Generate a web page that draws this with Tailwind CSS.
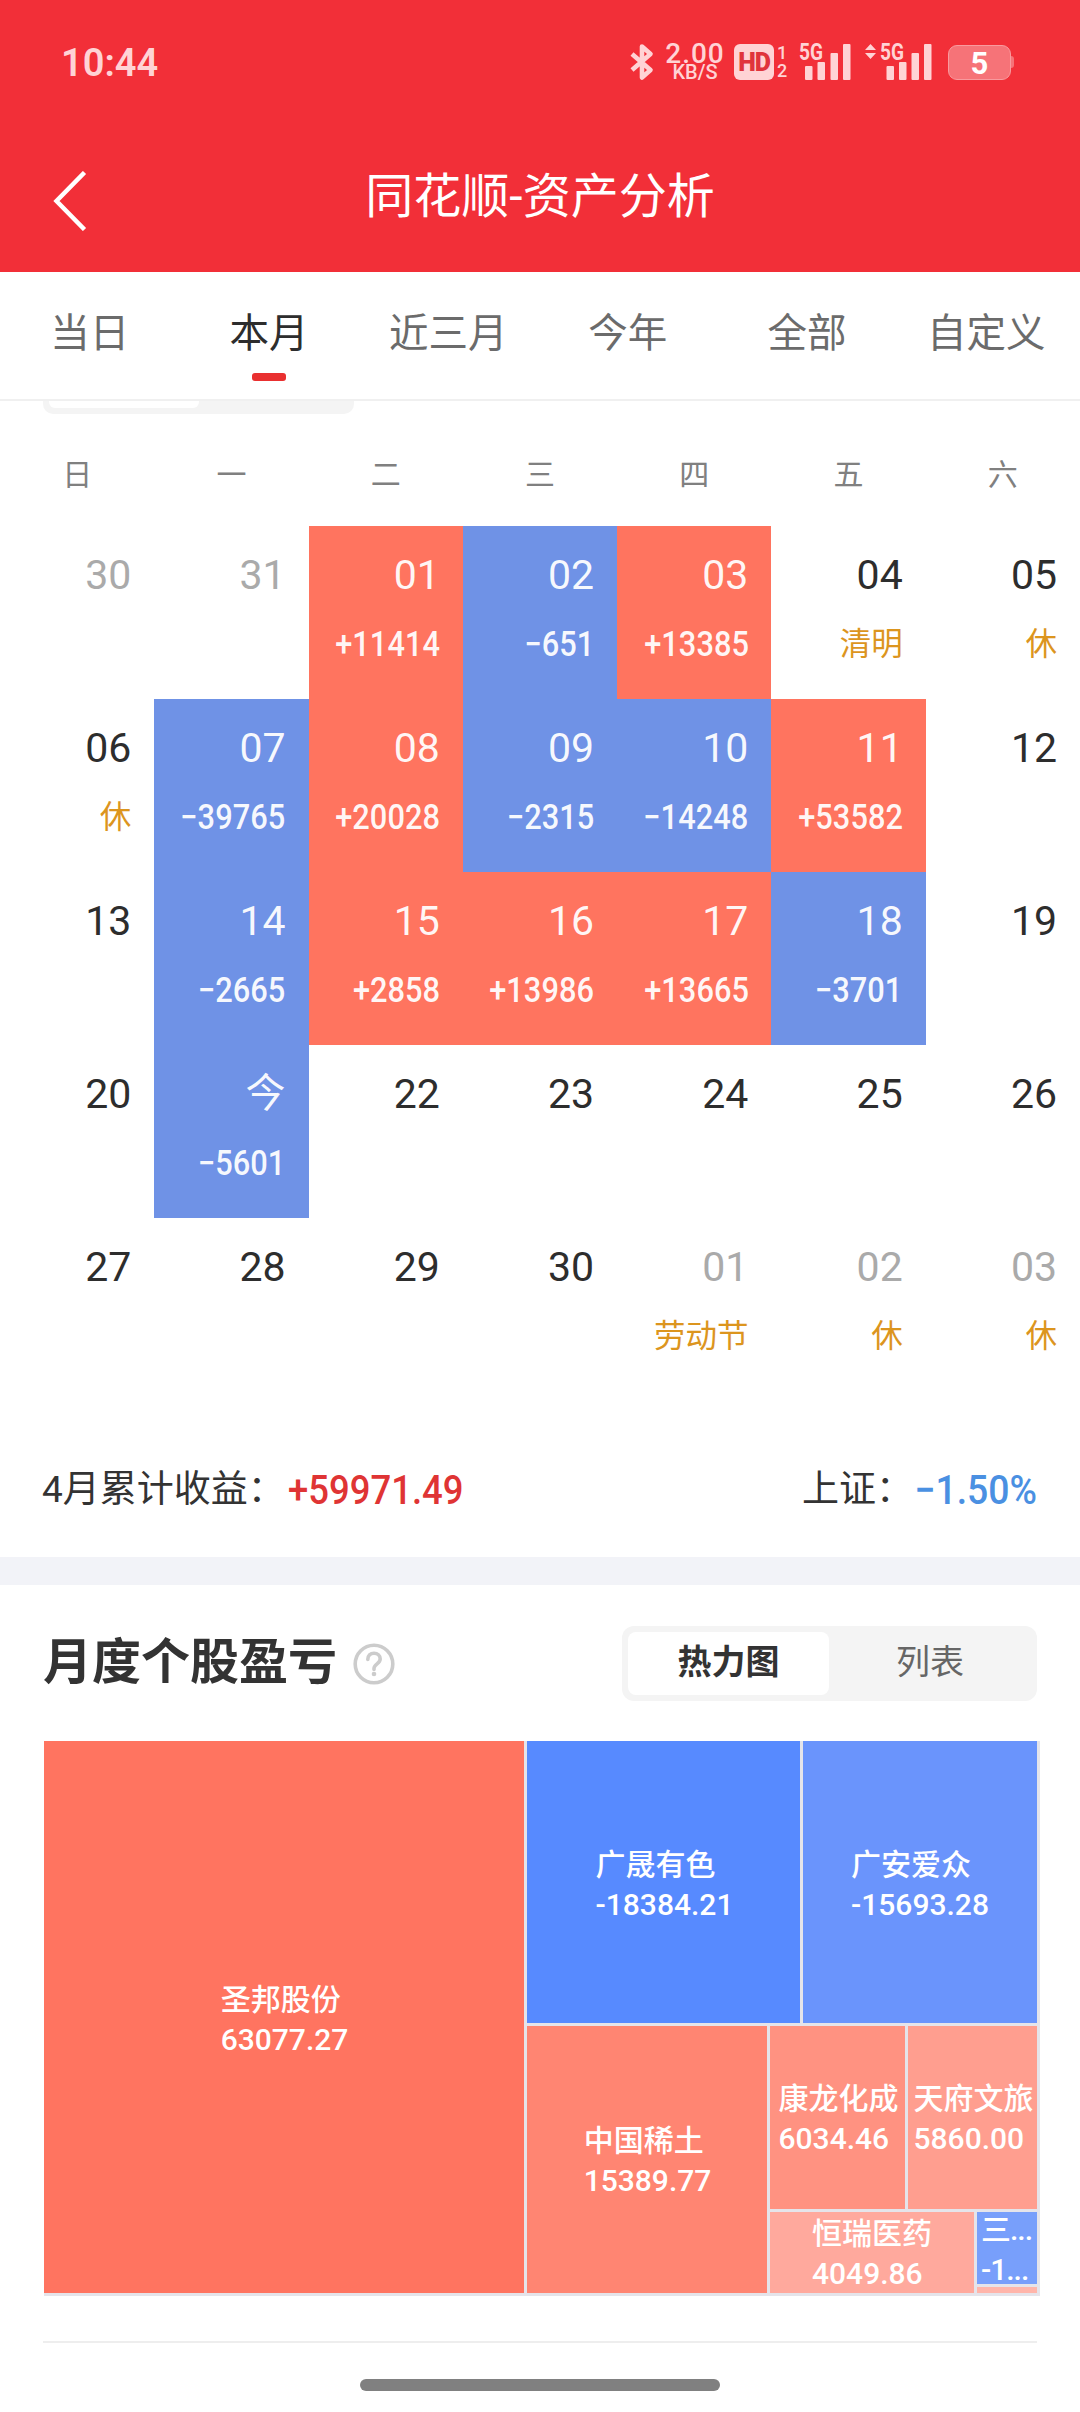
<!DOCTYPE html>
<html lang="zh-CN">

<head>
  <meta charset="UTF-8">
  <meta name="viewport"
    content="width=device-width, initial-scale=1.0">
  <title>同花顺-资产分析</title>
  <script src="https://cdn.jsdelivr.net/npm/@tailwindcss/browser@4"></script>
</head>

<body
  class="bg-white w-[1080px] h-[2412px] overflow-hidden flex flex-col font-[Roboto,'Noto_Sans_CJK_SC',sans-serif] text-[#333]">

  <header class="bg-[#f22f38] h-[272px] shrink-0 text-white">
    <!-- Status bar -->
    <div class="h-[124px] pl-[61px] pr-[66px] flex items-center justify-between text-[#ffd3d5]">
      <span class="text-[38px] leading-none font-semibold pt-0.5">10:44</span>
      <div class="flex items-center h-[38px]">
        <svg class="w-[24px] h-[38px] mr-[11px]" viewBox="0 0 24 38" fill="none" stroke="currentColor" stroke-width="4.6" stroke-linejoin="round">
          <path d="M2 11 20.500 27 12 34.500V3.500L20.500 11 2 27" />
        </svg>
        <div class="w-[60px] h-[38px] mr-[9px] flex flex-col items-center">
          <span class="text-[28px] leading-[21px] font-medium tracking-[1px]">2.00</span>
          <span class="text-[20px] leading-[17px] font-medium">KB/S</span>
        </div>
        <div class="w-10 h-9 rounded-md bg-[#ffd3d5] text-[#e0343c] flex items-center justify-center text-[25px] leading-none font-black tracking-[-1px]">HD</div>
        <div class="w-[14px] ml-px mr-[10px] flex flex-col items-center text-[18px] leading-[18px] font-medium">
          <span>1</span>
          <span>2</span>
        </div>
        <svg class="w-[54px] h-[38px] mr-[12px] overflow-visible" viewBox="0 0 54 38" fill="currentColor">
          <text x="0" y="16.500" font-size="23" font-weight="700" textLength="24" lengthAdjust="spacingAndGlyphs">5G</text>
          <rect x="6" y="23" width="7.5" height="14" rx="1" />
          <rect x="18.5" y="19" width="7.5" height="18" rx="1" />
          <rect x="31.5" y="10" width="7.5" height="27" rx="1" />
          <rect x="44" y="1" width="7.5" height="36" rx="1" />
        </svg>
        <svg class="w-[70px] h-[38px] mr-[13px] overflow-visible" viewBox="0 0 70 38" fill="currentColor">
          <path d="M5.5 1 11 7H0ZM5.5 16 11 10H0Z" />
          <text x="15" y="16.500" font-size="23" font-weight="700" textLength="24" lengthAdjust="spacingAndGlyphs">5G</text>
          <rect x="21.500" y="23" width="7.5" height="14" rx="1" />
          <rect x="34" y="19" width="7.5" height="18" rx="1" />
          <rect x="46.500" y="10" width="7.5" height="27" rx="1" />
          <rect x="59" y="1" width="7.5" height="36" rx="1" />
        </svg>
        <div class="w-[63px] h-[35px] rounded-[9px] bg-[#f67378] border border-[#f99a9e] flex items-center justify-center text-white text-[31px] leading-none font-bold pt-0.5">5</div>
        <div class="w-[3px] h-[12px] rounded-r-[3px] bg-[#f67378]"></div>
      </div>
    </div>
    <!-- Title bar -->
    <div class="h-[148px] flex items-start">
      <svg class="w-[34px] h-[60px] ml-[53px] mt-[47px]" viewBox="0 0 34 60" fill="none" stroke="currentColor" stroke-width="4.5">
        <path d="M31.500 1.500 3.500 30 31.500 58.500" />
      </svg>
      <h1 class="flex-1 pr-[87px] mt-[37px] text-center text-[48px] leading-[72px]">同花顺-资产分析</h1>
    </div>
  </header>

  <nav class="h-[129px] shrink-0 border-b-2 border-[#f0f0f0] pr-[4px] grid grid-cols-6 text-center text-[39.500px] leading-[60px] text-[#6b6b6b]">
    <span class="pt-[32px]">当日</span>
    <span class="pt-[32px] text-[#2d2d2d] flex flex-col items-center">本月<i class="block w-[34px] h-2 mt-[9px] rounded-[3px] bg-[#e93030]"></i></span>
    <span class="pt-[32px]">近三月</span>
    <span class="pt-[32px]">今年</span>
    <span class="pt-[32px]">全部</span>
    <span class="pt-[32px]">自定义</span>
  </nav>

  <!-- Bottom edge of the scrolled calendar switch -->
  <div class="ml-[43px] w-[311px] h-[13px] shrink-0 rounded-b-[10px] bg-[#f4f4f4] pl-[6px]">
    <div class="w-[150px] h-[7px] rounded-b-md bg-white"></div>
  </div>

  <section class="h-[1143px] shrink-0">
    <div class="h-[112px] pt-[41px] grid grid-cols-7 text-center text-[30px] leading-[40px] text-[#808080]">
      <span>日</span>
      <span>一</span>
      <span>二</span>
      <span>三</span>
      <span>四</span>
      <span>五</span>
      <span>六</span>
    </div>
    <div id="calendar" class="grid grid-cols-7 auto-rows-[173px]"></div>
    <div class="h-[166px] pl-[42px] pr-[43px] pt-[73px] flex justify-between text-[37px] leading-[52px]">
      <div class="flex">
        <span class="w-[246px] whitespace-nowrap">4月累计收益：</span>
        <span class="inline-block w-[175px] origin-left scale-x-[.89] text-[41px] font-medium text-[#df3434]">+59971.49</span>
      </div>
      <div class="flex justify-end">
        <span class="w-[95px] whitespace-nowrap">上证：</span>
        <span class="inline-block w-[140px] text-right origin-right scale-x-[.91] text-[41px] font-medium text-[#4a90e2]">−1.50%</span>
      </div>
    </div>
  </section>

  <div class="h-[28px] shrink-0 bg-[#f2f3f8]"></div>

  <section class="px-[43px] shrink-0">
    <div class="h-[156px] pt-[41px] flex items-start justify-between">
      <div class="flex items-center h-[74px]">
        <h2 class="text-[49px] leading-[72px] font-bold">月度个股盈亏</h2>
        <svg class="w-[42px] h-[42px] ml-[16px] mt-[2px]" viewBox="0 0 42 42" fill="none" stroke="#ccc" stroke-width="3.6">
          <circle cx="21" cy="21" r="18.800" />
          <path d="M14.800 16.500c0-4 2.700-6.300 6.200-6.300s6.200 2.400 6.200 5.800c0 4.600-6.200 5-6.200 9.500v1" stroke-linecap="round" />
          <circle cx="21" cy="31" r="2.300" fill="#ccc" stroke="none" />
        </svg>
      </div>
      <div class="w-[415px] h-[75px] p-[6px] rounded-xl bg-[#f4f4f4] flex text-[34px] leading-[60px] text-center">
        <div class="w-[201px] h-[63px] rounded-lg bg-white font-bold">热力图</div>
        <div class="flex-1 text-[#666]">列表</div>
      </div>
    </div>

    <!-- Heat map -->
    <div class="ml-px w-[996px] h-[555px] pr-[3px] pb-[3px] bg-[#e5e4ea] flex gap-[3px] text-white text-[30px] leading-[40px] font-medium whitespace-nowrap">
      <div class="w-[480px] bg-[#ff7460] flex items-center justify-center">
        <p class="pt-1.5 pl-px">圣邦股份<br>63077.27</p>
      </div>
      <div class="flex-1 flex flex-col gap-[3px]">
        <div class="h-[282px] shrink-0 flex gap-[3px]">
          <div class="w-[273px] bg-[#578aff] flex items-center justify-center">
            <p class="pt-1.5 pl-0.5">广晟有色<br>-18384.21</p>
          </div>
          <div class="flex-1 bg-[#6a94fc] flex items-center justify-center">
            <p class="pt-1.5">广安爱众<br>-15693.28</p>
          </div>
        </div>
        <div class="h-[267px] flex gap-[3px]">
          <div class="w-[240px] bg-[#ff8572] flex items-center justify-center">
            <p class="pt-0.5 pl-px">中国稀土<br>15389.77</p>
          </div>
          <div class="flex-1 flex flex-col gap-[3px]">
            <div class="h-[183px] shrink-0 flex gap-[3px]">
              <div class="w-[135px] bg-[#ff9281] flex items-center justify-center">
                <p class="pt-0.5 pl-0.5">康龙化成<br>6034.46</p>
              </div>
              <div class="flex-1 bg-[#ff9e8f] flex items-center justify-center">
                <p class="pt-0.5 pl-0.5">天府文旅<br>5860.00</p>
              </div>
            </div>
            <div class="h-[81px] flex gap-[3px]">
              <div class="w-[204px] h-[81px] bg-[#ffa99d] flex items-center justify-center">
                <p class="pt-0.5">恒瑞医药<br>4049.86</p>
              </div>
              <div class="flex-1 flex flex-col gap-[3px]">
                <div class="h-[72px] shrink-0 bg-[#789ffb] flex items-center pl-1">
                  <p class="pt-1 tracking-[-1px]">三...<br>-1...</p>
                </div>
                <div class="h-[6px] bg-[#ffb5aa]"></div>
              </div>
            </div>
          </div>
        </div>
      </div>
    </div>

    <div class="mt-[45px] h-[2px] bg-[#eee]"></div>
  </section>

  <div class="mt-[36px] mx-auto w-[360px] h-3 shrink-0 rounded-full bg-[#808080]"></div>

  <script>
    // [day, note]: a signed note is profit/loss, anything else is a holiday mark
    const days = [
      ['30'], ['31'], ['01', '+11414'], ['02', '−651'], ['03', '+13385'], ['04', '清明'], ['05', '休'],
      ['06', '休'], ['07', '−39765'], ['08', '+20028'], ['09', '−2315'], ['10', '−14248'], ['11', '+53582'], ['12'],
      ['13'], ['14', '−2665'], ['15', '+2858'], ['16', '+13986'], ['17', '+13665'], ['18', '−3701'], ['19'],
      ['20'], ['今', '−5601'], ['22'], ['23'], ['24'], ['25'], ['26'],
      ['27'], ['28'], ['29'], ['30'], ['01', '劳动节'], ['02', '休'], ['03', '休'],
    ];
    const calendar = document.getElementById('calendar');

    days.forEach(([day, note = ''], i) => {
      const outside = i < 2 || i > 31;
      const gain = note.startsWith('+');
      const loss = note.startsWith('−');

      const cell = document.createElement('div');
      cell.className = 'pt-[24px] pr-[23px] flex flex-col items-end';
      if (gain) cell.classList.add('bg-[#ff745f]', 'text-white/95');
      else if (loss) cell.classList.add('bg-[#6f92e6]', 'text-white/95');
      else if (outside) cell.classList.add('text-[#aaa]');
      else cell.classList.add('text-[#2d2d2d]');

      const dayDiv = document.createElement('div');
      dayDiv.className = day === '今' ? 'text-[40px] leading-[50px]' : 'text-[41px] leading-[50px]';
      dayDiv.textContent = day;
      cell.appendChild(dayDiv);

      if (note) {
        const noteDiv = document.createElement('div');
        noteDiv.className = gain || loss
          ? 'mt-[20px] text-[35px] leading-[50px] font-medium origin-right scale-x-[.88]'
          : 'mt-[20px] text-[31.500px] leading-[50px] text-[#dc951e]';
        noteDiv.textContent = note;
        cell.appendChild(noteDiv);
      }
      calendar.appendChild(cell);
    });
  </script>
</body>

</html>
